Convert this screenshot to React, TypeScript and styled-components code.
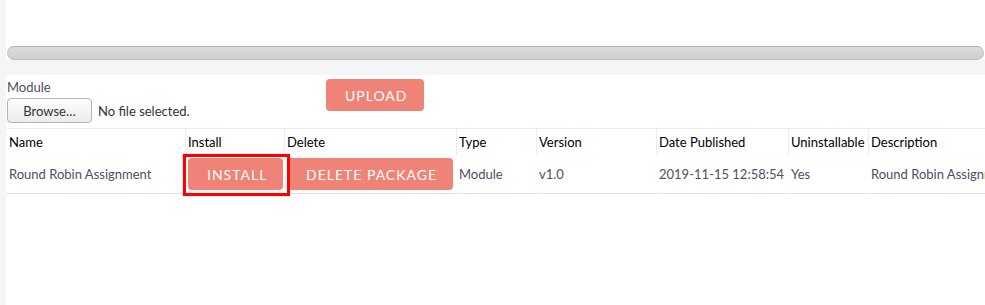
import styled, {createGlobalStyle} from "styled-components";

const GlobalStyle = createGlobalStyle`
body {
    margin: 0;
    background-color: #f5f5f5;
    font-family: 'Lato', 'Liberation Sans', sans-serif;
    font-size: 13px;
    color: #534d64;
    overflow: hidden;
}
`

const Page = styled.div`
display: flex;
flex-direction: column;
gap: 15px;
width: 985px;
height: 305px;
`

const TopPanel = styled.div`
margin-left: 6px;
height: 60px;
background-color: #fff;
display: flex;
flex-direction: column;
justify-content: flex-end;
padding: 0 1px;
box-sizing: border-box;
`

const ScrollTrack = styled.div`
height: 14px;
box-sizing: border-box;
border: 1px solid #c2c0bb;
border-top-color: #b7b4ad;
border-radius: 7px;
background: linear-gradient(#dcdcdc, #d4d4d4 60%, #cfcfcf);
`

const Content = styled.div`
flex: 1;
margin-left: 6px;
background-color: #fff;
padding-top: 4px;
overflow: hidden;
`

const UploadForm = styled.div`
display: flex;
align-items: flex-start;
padding-left: 1px;
`

const FieldGroup = styled.div`
width: 319px;
display: flex;
flex-direction: column;
gap: 3px;
`

const Label = styled.label`
color: #534d64;
line-height: 16px;
`

const FileRow = styled.div`
display: flex;
align-items: center;
gap: 6px;
`

const Browse = styled.span`
display: inline-flex;
align-items: center;
justify-content: center;
width: 85px;
height: 25px;
box-sizing: border-box;
border: 1px solid #b4b4b4;
border-radius: 4px;
background: linear-gradient(#fdfdfd, #ececec);
color: #333;
font-family: 'Lato', 'Liberation Sans', sans-serif;
font-size: 13px;
`

const FileName = styled.span`
color: #333;
`

const Button = styled.button`
height: 32px;
padding: 0 16px 0 19px;
border: none;
border-radius: 4px;
background-color: #f08377;
color: #fff;
font-family: 'Lato', 'Liberation Sans', sans-serif;
font-size: 14px;
letter-spacing: 1px;
text-transform: uppercase;
cursor: pointer;
white-space: nowrap;
`

const Table = styled.table`
margin-top: 5px;
border-collapse: separate;
border-spacing: 0;
table-layout: fixed;
width: 1040px;
`

const Th = styled.th<{ $w: number; $first?: boolean }>`
width: ${p => p.$w}px;
box-sizing: border-box;
height: 27px;
padding: 0 2px;
border-top: 1px solid #ebebeb;
border-left: 1px solid ${p => p.$first ? 'transparent' : '#ececec'};
text-align: left;
font-weight: 400;
color: #000;
white-space: nowrap;
`

const Td = styled.td`
height: 38px;
padding: 0 2px;
border-left: 1px solid transparent;
border-bottom: 1px solid #e2e2e2;
white-space: nowrap;
vertical-align: middle;
color: #534d64;
`

const Marked = styled.div`
position: relative;
display: inline-block;
`

const Highlight = styled.div`
position: absolute;
top: -4px;
bottom: -6px;
left: -5px;
right: -7px;
border: 3px solid #ff0000;
box-shadow: 0 0 1px #ff8080;
z-index: 2;
pointer-events: none;
`

const columns = [
    {title: 'Name', w: 179},
    {title: 'Install', w: 99},
    {title: 'Delete', w: 172},
    {title: 'Type', w: 80},
    {title: 'Version', w: 120},
    {title: 'Date Published', w: 132},
    {title: 'Uninstallable', w: 80},
    {title: 'Description', w: 178},
]

const App = () => {
    return (
        <>
            <GlobalStyle/>
            <Page>
                <TopPanel>
                    <ScrollTrack/>
                </TopPanel>
                <Content>
                    <UploadForm>
                        <FieldGroup>
                            <Label htmlFor='upload'>Module</Label>
                            <FileRow>
                                <Browse>Browse…</Browse>
                                <FileName>No file selected.</FileName>
                            </FileRow>
                        </FieldGroup>
                        <Button type='button'>Upload</Button>
                    </UploadForm>
                    <Table>
                        <thead>
                        <tr>
                            {columns.map((c, i) =>
                                <Th key={c.title} $w={c.w} $first={i === 0}>{c.title}</Th>
                            )}
                        </tr>
                        </thead>
                        <tbody>
                        <tr>
                            <Td>Round Robin Assignment</Td>
                            <Td>
                                <Marked>
                                    <Button type='button'>Install</Button>
                                    <Highlight/>
                                </Marked>
                            </Td>
                            <Td><Button type='button'>Delete Package</Button></Td>
                            <Td>Module</Td>
                            <Td>v1.0</Td>
                            <Td>2019-11-15 12:58:54</Td>
                            <Td>Yes</Td>
                            <Td>Round Robin Assignment</Td>
                        </tr>
                        </tbody>
                    </Table>
                </Content>
            </Page>
        </>
    )
}

export default App;
